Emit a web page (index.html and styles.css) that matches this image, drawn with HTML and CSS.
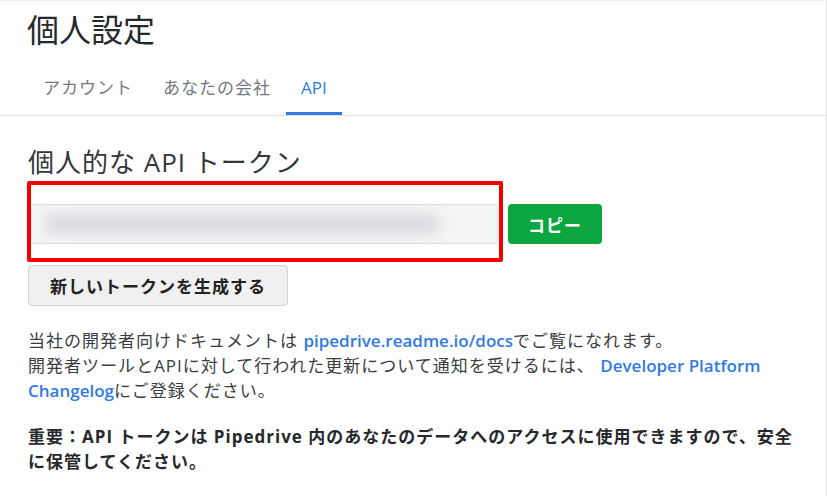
FILE: index.html
```html
<!DOCTYPE html>
<html lang="ja">
<head>
<meta charset="utf-8">
<title>個人設定</title>
<link rel="stylesheet" href="styles.css">
</head>
<body>
<div class="page">
  <header class="header">
    <h1 class="title">個人設定</h1>
    <nav class="tabs">
      <a class="tab">アカウント</a>
      <a class="tab">あなたの会社</a>
      <a class="tab active">API</a>
    </nav>
  </header>
  <main class="content">
    <h2 class="subtitle">個人的な API トークン</h2>
    <div class="token-area">
      <div class="token-row">
        <div class="token-input"><span class="blur"></span></div>
        <button class="btn-copy">コピー</button>
      </div>
      <div class="highlight"></div>
    </div>
    <button class="btn-generate">新しいトークンを生成する</button>
    <p class="info">当社の開発者向けドキュメントは <a class="link">pipedrive.readme.io/docs</a>でご覧になれます。<br>開発者ツールとAPIに対して行われた更新について通知を受けるには、 <a class="link">Developer Platform Changelog</a>にご登録ください。</p>
    <p class="important">重要：API トークンは Pipedrive 内のあなたのデータへのアクセスに使用できますので、安全に保管してください。</p>
  </main>
</div>
</body>
</html>
```
FILE: styles.css
```css
html, body {
  margin: 0;
  padding: 0;
  background: #fff;
}
body {
  font-family: "Open Sans", "Noto Sans CJK JP", sans-serif;
  color: #333;
}
.page {
  width: 826px;
  height: 495px;
  border-top: 1px solid #ececec;
  border-right: 1px solid #e2e2e2;
  overflow: hidden;
}
.header {
  border-bottom: 1px solid #e3e3e3;
}
.title {
  margin: 0;
  padding: 7px 0 0 27px;
  font-size: 32px;
  line-height: 44px;
  font-weight: 400;
  color: #26292c;
}
.tabs {
  display: flex;
  padding-left: 28px;
  margin-top: 23px;
}
.tab {
  padding: 0 15px;
  font-size: 17px;
  letter-spacing: 1px;
  line-height: 25px;
  height: 37px;
  color: #74787c;
  border-bottom: 3px solid transparent;
}
.tab.active {
  color: #317ae2;
  letter-spacing: 0;
  font-weight: 500;
  border-bottom-color: #317ae2;
}
.content {
  padding: 0 26px 0 28px;
}
.subtitle {
  margin: 29px 0 0;
  font-size: 26px;
  letter-spacing: 1px;
  line-height: 34px;
  font-weight: 400;
  color: #33373a;
}
.token-area {
  position: relative;
  margin-top: 2px;
  padding: 23px 0 21px;
}
.token-row {
  display: flex;
  gap: 10px;
  align-items: center;
}
.token-input {
  width: 470px;
  height: 40px;
  box-sizing: border-box;
  background: #f3f4f6;
  border: 1px solid #dcdde0;
  border-radius: 3px;
  position: relative;
  overflow: hidden;
}
.blur {
  position: absolute;
  left: 16px;
  top: 10px;
  width: 395px;
  height: 18px;
  background: #d7d8db;
  filter: blur(7px);
  border-radius: 9px;
}
.highlight {
  position: absolute;
  left: -1px;
  top: 0;
  width: 468px;
  height: 73px;
  border: 4px solid #f40000;
  border-radius: 2px;
}
.btn-copy {
  width: 94px;
  height: 40px;
  background: #0ca740;
  border: none;
  border-radius: 4px;
  color: #fff;
  font-family: "Open Sans", "Noto Sans CJK JP", sans-serif;
  font-size: 17px;
  letter-spacing: 1px;
  font-weight: 700;
}
.btn-generate {
  display: block;
  width: 260px;
  height: 41px;
  background: #f0f0f0;
  border: 1px solid #d4d4d4;
  border-radius: 4px;
  color: #222;
  font-family: "Open Sans", "Noto Sans CJK JP", sans-serif;
  font-size: 17px;
  letter-spacing: 1px;
  font-weight: 700;
}
.info {
  margin: 22px 0 0;
  font-size: 17px;
  letter-spacing: 1px;
  line-height: 25px;
  color: #3b3e41;
}
.link {
  color: #317ae2;
  font-weight: 600;
  letter-spacing: 0;
}
.important {
  margin: 21px 0 0;
  font-size: 17px;
  letter-spacing: 1px;
  line-height: 25px;
  font-weight: 700;
  color: #26292c;
}
```
